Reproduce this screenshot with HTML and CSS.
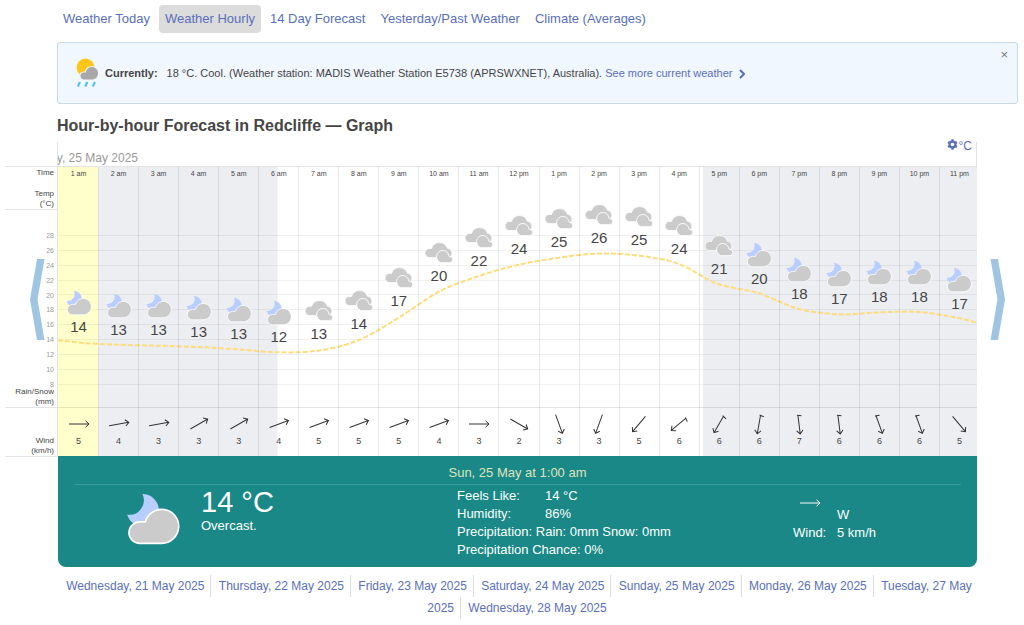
FILE: index.html
```html
<!DOCTYPE html>
<html lang="en">
<head>
<meta charset="utf-8">
<title>Hour-by-hour Forecast in Redcliffe</title>
<link rel="stylesheet" href="styles.css">
</head>
<body>
<svg class="sprite" aria-hidden="true">
  <symbol id="night" viewBox="0 0 28 28">
    <path d="M8.9 1A7.8 7.8 0 1 1 1.5 10.9 7 7 0 0 0 8.9 1z" fill="#b8ceff"/>
    <path d="M7.6 24.8a5.2 5.2 0 0 1 0-10.4h2.7a8.2 8.2 0 1 1 7.9 10.4z" fill="#cbcbcb" stroke="#fff" stroke-width=".8"/>
  </symbol>
  <symbol id="cloudy" viewBox="0 0 28 28">
    <path d="M4.6 18.6a4.6 4.6 0 0 1 0-9.2h1.9a8.4 8.4 0 0 1 15.9-.2 4.8 4.8 0 0 1 1 9.4z" fill="#cbcbcb" stroke="#fff" stroke-width=".8"/>
    <path d="M16.4 23.7a6.2 6.2 0 1 1 7.6-6.3h.6a3.1 3.1 0 0 1 0 6.3z" fill="#cbcbcb" stroke="#fff" stroke-width=".9"/>
  </symbol>
  <symbol id="wind" viewBox="-12 -12 24 24">
    <path d="M-10 0H10M6.5-3.2 10 0 6.5 3.2" fill="none" stroke="currentColor"/>
  </symbol>
  <symbol id="wind-strong" viewBox="-12 -12 24 24">
    <path d="M-9 0H10M6.5-3.2 10 0 6.5 3.2M-9 1-8-3.5" fill="none" stroke="currentColor"/>
  </symbol>
</svg>

<nav class="tabs">
  <a href="#">Weather Today</a>
  <a href="#" class="active">Weather Hourly</a>
  <a href="#">14 Day Forecast</a>
  <a href="#">Yesterday/Past Weather</a>
  <a href="#">Climate (Averages)</a>
</nav>

<section class="current">
  <svg class="current-icon" viewBox="0 0 24 30">
    <circle cx="9.5" cy="9.5" r="9" fill="#ffc61a"/>
    <path d="M8 22a4 4 0 0 1-.2-8h1.4a6.8 6.8 0 1 1 7.8 8z" fill="#a8a8a8" stroke="#f0f7fe" stroke-width="1.2"/>
    <path d="M3.6 24.8l-1.4 3M11 24.8l-1.4 3M18.6 24.8l-1.4 3" stroke="#56c2ec" stroke-width="2.2" stroke-linecap="round"/>
  </svg>
  <p><strong>Currently:</strong><span>18 °C. Cool. (Weather station: MADIS Weather Station E5738 (APRSWXNET), Australia).</span> <a href="#">See more current weather<svg class="chevron" viewBox="0 0 6 10"><path d="M1 1l4 4-4 4" fill="none" stroke="currentColor" stroke-width="2"/></svg></a></p>
  <button class="close" type="button" aria-label="Close">×</button>
</section>

<h1>Hour-by-hour Forecast in Redcliffe — Graph</h1>

<main class="forecast">
  <div class="axis">
    <button class="arrow prev" type="button" aria-label="Earlier hours"><svg viewBox="0 0 15 81"><path d="M7 0h7.5l-7 40.5 7 40.5H7L0 40.5z" fill="#9fc5e3"/></svg></button>
    <div class="axis-top"><span>Time</span><span>Temp<br>(°C)</span></div>
    <div class="axis-temp">
      <ol><li>28</li><li>26</li><li>24</li><li>22</li><li>20</li><li>18</li><li>16</li><li>14</li><li>12</li><li>10</li><li>8</li></ol>
      <span>Rain/Snow<br>(mm)</span>
    </div>
    <div class="axis-wind">Wind<br>(km/h)</div>
  </div>

  <div class="graph">
    <div class="graph-head">
      <div class="day">Sunday, 25 May 2025</div>
      <a class="units" href="#"><svg viewBox="0 0 12 12"><path d="M6 3.5V.3M6 8.5v3.2M3.8 4.8 1.2 3.2M8.2 7.2l2.6 1.6M8.2 4.8l2.6-1.6M3.8 7.2 1.2 8.8" stroke="currentColor" stroke-width="2.6"/><circle cx="6" cy="6" r="3.2" fill="none" stroke="currentColor" stroke-width="2.4"/></svg>°C</a>
    </div>
    <div class="plot">
      <div class="canvas">
        <svg class="backdrop" viewBox="0 0 921 289" preserveAspectRatio="none">
          <rect width="40.5" height="289" fill="#ffffcb"/>
          <rect x="40.5" width="179" height="289" fill="#edeef2"/>
          <rect x="645" width="276" height="289" fill="#edeef2"/>
          <path class="rule" d="M0 68.5H921M0 83.5H921M0 98.5H921M0 113.5H921M0 127.5H921M0 142.5H921M0 157.5H921M0 172.5H921M0 187.5H921M0 202.5H921M0 217.5H921"/>
          <path class="rule strong" d="M0 240.5H921"/>
          <path class="curve" d="M0 173.3C7 174 13 174.7 20 175.5S47 177.2 60 177.7 87 178.3 100 178.7 127 179.4 140 180 167 181.4 180 182.3 208 185.1 221 185.3 248 185.5 261 183.5 288 178.5 301 173 328 158.5 341 150.5 368 131.7 381 124.7 408 113.5 421 109 448 100.7 461 97.7 488 92.6 501 90.7 528 86.8 541 86.5 568 87 581 88.7 608 92.2 621 97 648 113 661 117.3 688 122.2 701 126.3 728 138.5 741 142 768 146.7 781 147.3 808 145.8 821 145.4 848 144.1 861 145 888 149 901 151L921 156"/>
        </svg>
        <div class="hours">
          <div class="hour"><time>1 am</time><div class="sky" style="top:123px"><svg><use href="#night"/></svg>14</div><div class="wind"><svg style="rotate:0deg"><use href="#wind"/></svg>5</div></div>
          <div class="hour"><time>2 am</time><div class="sky" style="top:126px"><svg><use href="#night"/></svg>13</div><div class="wind"><svg style="rotate:-10deg"><use href="#wind"/></svg>4</div></div>
          <div class="hour"><time>3 am</time><div class="sky" style="top:126px"><svg><use href="#night"/></svg>13</div><div class="wind"><svg style="rotate:-10deg"><use href="#wind"/></svg>3</div></div>
          <div class="hour"><time>4 am</time><div class="sky" style="top:128px"><svg><use href="#night"/></svg>13</div><div class="wind"><svg style="rotate:-30deg"><use href="#wind"/></svg>3</div></div>
          <div class="hour"><time>5 am</time><div class="sky" style="top:130px"><svg><use href="#night"/></svg>13</div><div class="wind"><svg style="rotate:-30deg"><use href="#wind"/></svg>3</div></div>
          <div class="hour"><time>6 am</time><div class="sky" style="top:133px"><svg><use href="#night"/></svg>12</div><div class="wind"><svg style="rotate:-20deg"><use href="#wind"/></svg>4</div></div>
          <div class="hour"><time>7 am</time><div class="sky" style="top:130px"><svg><use href="#cloudy"/></svg>13</div><div class="wind"><svg style="rotate:-20deg"><use href="#wind"/></svg>5</div></div>
          <div class="hour"><time>8 am</time><div class="sky" style="top:120px"><svg><use href="#cloudy"/></svg>14</div><div class="wind"><svg style="rotate:-20deg"><use href="#wind"/></svg>5</div></div>
          <div class="hour"><time>9 am</time><div class="sky" style="top:97px"><svg><use href="#cloudy"/></svg>17</div><div class="wind"><svg style="rotate:-20deg"><use href="#wind"/></svg>5</div></div>
          <div class="hour"><time>10 am</time><div class="sky" style="top:72px"><svg><use href="#cloudy"/></svg>20</div><div class="wind"><svg style="rotate:-20deg"><use href="#wind"/></svg>4</div></div>
          <div class="hour"><time>11 am</time><div class="sky" style="top:57px"><svg><use href="#cloudy"/></svg>22</div><div class="wind"><svg style="rotate:0deg"><use href="#wind"/></svg>3</div></div>
          <div class="hour"><time>12 pm</time><div class="sky" style="top:45px"><svg><use href="#cloudy"/></svg>24</div><div class="wind"><svg style="rotate:30deg"><use href="#wind"/></svg>2</div></div>
          <div class="hour"><time>1 pm</time><div class="sky" style="top:38px"><svg><use href="#cloudy"/></svg>25</div><div class="wind"><svg style="rotate:70deg"><use href="#wind"/></svg>3</div></div>
          <div class="hour"><time>2 pm</time><div class="sky" style="top:34px"><svg><use href="#cloudy"/></svg>26</div><div class="wind"><svg style="rotate:110deg"><use href="#wind"/></svg>3</div></div>
          <div class="hour"><time>3 pm</time><div class="sky" style="top:36px"><svg><use href="#cloudy"/></svg>25</div><div class="wind"><svg style="rotate:130deg"><use href="#wind"/></svg>5</div></div>
          <div class="hour"><time>4 pm</time><div class="sky" style="top:45px"><svg><use href="#cloudy"/></svg>24</div><div class="wind"><svg style="rotate:140deg"><use href="#wind-strong"/></svg>6</div></div>
          <div class="hour"><time>5 pm</time><div class="sky" style="top:65px"><svg><use href="#cloudy"/></svg>21</div><div class="wind"><svg style="rotate:120deg"><use href="#wind-strong"/></svg>6</div></div>
          <div class="hour"><time>6 pm</time><div class="sky" style="top:75px"><svg><use href="#night"/></svg>20</div><div class="wind"><svg style="rotate:100deg"><use href="#wind-strong"/></svg>6</div></div>
          <div class="hour"><time>7 pm</time><div class="sky" style="top:90px"><svg><use href="#night"/></svg>18</div><div class="wind"><svg style="rotate:83deg"><use href="#wind-strong"/></svg>7</div></div>
          <div class="hour"><time>8 pm</time><div class="sky" style="top:95px"><svg><use href="#night"/></svg>17</div><div class="wind"><svg style="rotate:83deg"><use href="#wind-strong"/></svg>6</div></div>
          <div class="hour"><time>9 pm</time><div class="sky" style="top:93px"><svg><use href="#night"/></svg>18</div><div class="wind"><svg style="rotate:70deg"><use href="#wind-strong"/></svg>6</div></div>
          <div class="hour"><time>10 pm</time><div class="sky" style="top:93px"><svg><use href="#night"/></svg>18</div><div class="wind"><svg style="rotate:70deg"><use href="#wind-strong"/></svg>6</div></div>
          <div class="hour"><time>11 pm</time><div class="sky" style="top:100px"><svg><use href="#night"/></svg>17</div><div class="wind"><svg style="rotate:50deg"><use href="#wind"/></svg>5</div></div>
        </div>
      </div>
    </div>

    <section class="detail">
      <h2>Sun, 25 May at 1:00 am</h2>
      <div class="detail-body">
        <div class="summary">
          <svg><use href="#night"/></svg>
          <div><div class="big-temp">14 °C</div><div>Overcast.</div></div>
        </div>
        <div class="facts">
          <div><span class="name">Feels Like:</span><span>14 °C</span></div>
          <div><span class="name">Humidity:</span><span>86%</span></div>
          <div>Precipitation: Rain: 0mm Snow: 0mm</div>
          <div>Precipitation Chance: 0%</div>
        </div>
        <div class="wind-facts">
          <svg><use href="#wind"/></svg><span class="from">W</span>
          <span>Wind:</span><span>5 km/h</span>
        </div>
      </div>
    </section>
  </div>

  <div class="side">
    <button class="arrow" type="button" aria-label="Later hours"><svg viewBox="0 0 15 81"><path d="M8 0H.5l7 40.5-7 40.5H8l7-40.5z" fill="#9fc5e3"/></svg></button>
  </div>
</main>

<ul class="days">
  <li><a href="#">Wednesday, 21 May 2025</a></li>
  <li><a href="#">Thursday, 22 May 2025</a></li>
  <li><a href="#">Friday, 23 May 2025</a></li>
  <li><a href="#">Saturday, 24 May 2025</a></li>
  <li><a href="#">Sunday, 25 May 2025</a></li>
  <li><a href="#">Monday, 26 May 2025</a></li>
  <li><a href="#">Tuesday, 27 May 2025</a></li>
  <li><a href="#">Wednesday, 28 May 2025</a></li>
</ul>
</body>
</html>
```

FILE: styles.css
```css
* { box-sizing: border-box; }
body {
  margin: 0;
  background: #fff;
  color: #454545;
  font-family: "Liberation Sans", Arial, sans-serif;
  font-size: 13px;
}
a { color: #5a6fba; text-decoration: none; }
button { border: 0; padding: 0; background: none; font: inherit; color: inherit; cursor: pointer; }
svg { display: block; }
.sprite { position: absolute; width: 0; height: 0; }

.tabs { display: flex; flex-wrap: wrap; gap: 3px; padding: 5px 6px 0 57px; }
.tabs a { padding: 0 6px; line-height: 28px; border-radius: 4px; }
.tabs .active { background: #dcdcdc; }

.current {
  position: relative;
  display: flex;
  align-items: center;
  gap: 5px;
  min-height: 62px;
  margin: 9px 6px 0 57px;
  padding: 0 18px;
  border: 1px solid #c8d9e8;
  border-radius: 3px;
  background: #f0f7fe;
  font-size: 11px;
}
.current p { margin: 0; line-height: 16px; }
.current strong { margin-right: 9px; }
.current-icon { width: 24px; height: 30px; flex: none; }
.chevron { display: inline-block; width: 6px; height: 10px; margin-left: 7px; vertical-align: -2px; }
.close { position: absolute; top: 4px; right: 9px; font-size: 13px; line-height: 16px; color: #777; }

h1 { margin: 12px 6px 6px 57px; font-size: 16px; line-height: 20px; color: #454545; }

.forecast { display: grid; grid-template-columns: 53px minmax(0, 1fr) 47px; padding-left: 5px; }
.axis { position: relative; padding-top: 24px; text-align: right; font-size: 8px; line-height: 10px; }
.axis-top, .axis-temp, .axis-wind { padding-right: 3px; margin-right: 1px; border-bottom: 1px solid #e4e4e4; }
.axis-top { display: flex; flex-direction: column; justify-content: space-between; height: 44px; padding-top: 1px; border-top: 1px solid #e4e4e4; }
.axis-temp { display: flex; flex-direction: column; height: 198px; padding-top: 21px; }
.axis-temp ol {
  display: flex;
  flex-direction: column;
  justify-content: space-between;
  height: 158px;
  margin: 0;
  padding: 0;
  list-style: none;
  font-size: 7px;
  line-height: 9px;
  color: #999;
}
.axis-temp span { margin-top: -2px; }
.axis-wind { height: 49px; padding-top: 28px; }

.arrow svg { width: 15px; height: 81px; }
.arrow.prev { position: absolute; top: 117px; left: 25px; }
.side { padding: 117px 0 0 13px; }

.graph-head {
  display: flex;
  justify-content: space-between;
  height: 24px;
  border-left: 1px solid #e4e4e4;
  border-right: 1px solid #e4e4e4;
  margin-left: -1px;
}
.day { display: flex; justify-content: flex-end; width: 80px; overflow: hidden; white-space: nowrap; padding-top: 9px; font-size: 12px; line-height: 15px; color: #999; }
.units { display: flex; gap: 1px; height: 12px; padding-right: 4px; font-size: 12px; line-height: 8px; }
.units svg { width: 11px; height: 11px; margin-top: -3px; }

.plot { overflow: hidden; border-top: 1px solid #e4e4e4; border-left: 1px solid #e4e4e4; margin-left: -1px; }
.canvas { position: relative; margin-right: -2px; height: 289px; }
.backdrop { position: absolute; width: 100%; height: 100%; }
.rule { stroke: #000; stroke-opacity: .05; }
.rule.strong { stroke-opacity: .1; }
.curve { fill: none; stroke: #ffdc7c; stroke-width: 2; stroke-dasharray: 5 2; }
.hours { position: relative; display: grid; grid-template-columns: repeat(23, 1fr); height: 100%; margin: 0 -1px 0 1px; }
.hour { position: relative; display: flex; flex-direction: column; justify-content: space-between; border-right: 1px solid rgba(0, 0, 0, .09); text-align: center; }
.hour time { padding-top: 2px; font-size: 7px; line-height: 10px; }
.sky { position: absolute; left: 0; right: 0; font-size: 15px; line-height: 18px; }
.sky svg { width: 28px; height: 28px; margin: 0 auto; }
.wind { padding-bottom: 9px; font-size: 9px; line-height: 11px; }
.wind svg { width: 24px; height: 24px; margin: 0 auto; color: #333; }

.detail { padding: 8px 16px 0; min-height: 111px; border-radius: 0 0 8px 8px; background: #198886; color: #fff; }
.detail h2 { margin: 0; padding-bottom: 3px; border-bottom: 1px solid #3a9b98; font-size: 13px; font-weight: 400; line-height: 17px; text-align: center; color: #dfe3bd; }
.detail-body { display: grid; grid-template-columns: 333fr 336fr 168fr; padding: 2px 0 0 50px; line-height: 18px; }
.summary { display: flex; gap: 19px; }
.summary svg { width: 58px; height: 58px; margin-top: 5px; }
.big-temp { font-size: 29px; line-height: 30px; }
.facts .name { display: inline-block; width: 88px; }
.wind-facts { display: grid; grid-template-columns: 44px 1fr; align-content: start; line-height: 18px; }
.wind-facts svg { width: 24px; height: 24px; margin: 4px 0 0 5px; }
.from { padding-top: 19px; }

.days { margin: 8px 47px 0 57px; padding: 0; list-style: none; text-align: center; font-size: 12px; line-height: 22px; }
.days li { display: inline; padding: 4px 6px 4px 4px; border-right: 1px solid #ddd; }
.days li:last-child { border-right: 0; padding-right: 0; }
```
